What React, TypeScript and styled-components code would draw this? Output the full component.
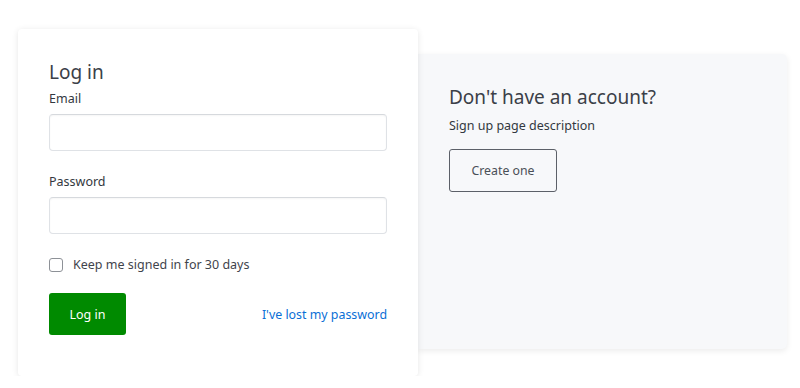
import styled, { createGlobalStyle } from "styled-components";

const GlobalStyle = createGlobalStyle`
  body {
    margin: 0;
    background: #ffffff;
    font-family: "Noto Sans", "Open Sans", sans-serif;
    color: #333840;
  }
`;

const Page = styled.div`
  display: flex;
  align-items: flex-start;
  padding: 29px 0 0 18px;
`;

const LoginCard = styled.div`
  position: relative;
  z-index: 1;
  width: 400px;
  height: 347px;
  box-sizing: border-box;
  padding: 30px 31px 0;
  background: #ffffff;
  border-radius: 4px;
  box-shadow: 0 1px 6px rgba(0, 0, 0, 0.1);
`;

const SignupCard = styled.div`
  width: 369px;
  height: 295px;
  margin-top: 25px;
  box-sizing: border-box;
  padding: 30px 31px 0;
  background: #f7f8fa;
  border-radius: 0 5px 5px 0;
  box-shadow: 0 2px 6px rgba(0, 0, 0, 0.08);
`;

const Title = styled.h2`
  margin: 0;
  font-size: 19px;
  font-weight: 400;
  line-height: 26px;
  color: #3b4048;
`;

const Label = styled.label`
  display: block;
  font-size: 12.5px;
  line-height: 16px;
  color: #333840;
  margin-bottom: 7px;
`;

const Field = styled.div<{ gap: number }>`
  margin-top: ${(p) => p.gap}px;
`;

const Input = styled.input`
  display: block;
  width: 338px;
  height: 37px;
  box-sizing: border-box;
  border: 1px solid #dfe2e6;
  border-top-color: #d6d9dd;
  border-radius: 4px;
  background: #fff;
  box-shadow: inset 0 1px 2px rgba(0, 0, 0, 0.04);
  outline: none;
`;

const CheckRow = styled.label`
  display: flex;
  align-items: center;
  gap: 10px;
  margin-top: 22px;
  font-size: 12.5px;
  color: #3f444c;
`;

const Box = styled.span`
  width: 14px;
  height: 14px;
  box-sizing: border-box;
  border: 1px solid #8d9197;
  border-radius: 3px;
  background: #fff;
`;

const Actions = styled.div`
  display: flex;
  align-items: center;
  justify-content: space-between;
  width: 338px;
  margin-top: 20px;
`;

const PrimaryButton = styled.button`
  width: 77px;
  height: 42px;
  border: none;
  border-radius: 3px;
  background: #008a00;
  color: #ffffff;
  font-family: inherit;
  font-size: 12.5px;
`;

const LostLink = styled.a`
  font-size: 12.4px;
  color: #0a6fd6;
  text-decoration: none;
`;

const Description = styled.p`
  margin: 8px 0 0;
  font-size: 12.5px;
  line-height: 16px;
  color: #333840;
`;

const OutlineButton = styled.button`
  margin-top: 15px;
  width: 108px;
  height: 43px;
  border: 1px solid #5c6068;
  border-radius: 3px;
  background: transparent;
  color: #4a4f57;
  font-family: inherit;
  font-size: 12.3px;
`;

export default function App() {
  return (
    <>
      <GlobalStyle />
      <Page>
        <LoginCard>
          <Title>Log in</Title>
          <Field gap={6}>
            <Label>Email</Label>
            <Input type="email" />
          </Field>
          <Field gap={23}>
            <Label>Password</Label>
            <Input type="password" />
          </Field>
          <CheckRow>
            <Box />
            Keep me signed in for 30 days
          </CheckRow>
          <Actions>
            <PrimaryButton>Log in</PrimaryButton>
            <LostLink href="#">I've lost my password</LostLink>
          </Actions>
        </LoginCard>
        <SignupCard>
          <Title>Don't have an account?</Title>
          <Description>Sign up page description</Description>
          <OutlineButton>Create one</OutlineButton>
        </SignupCard>
      </Page>
    </>
  );
}
